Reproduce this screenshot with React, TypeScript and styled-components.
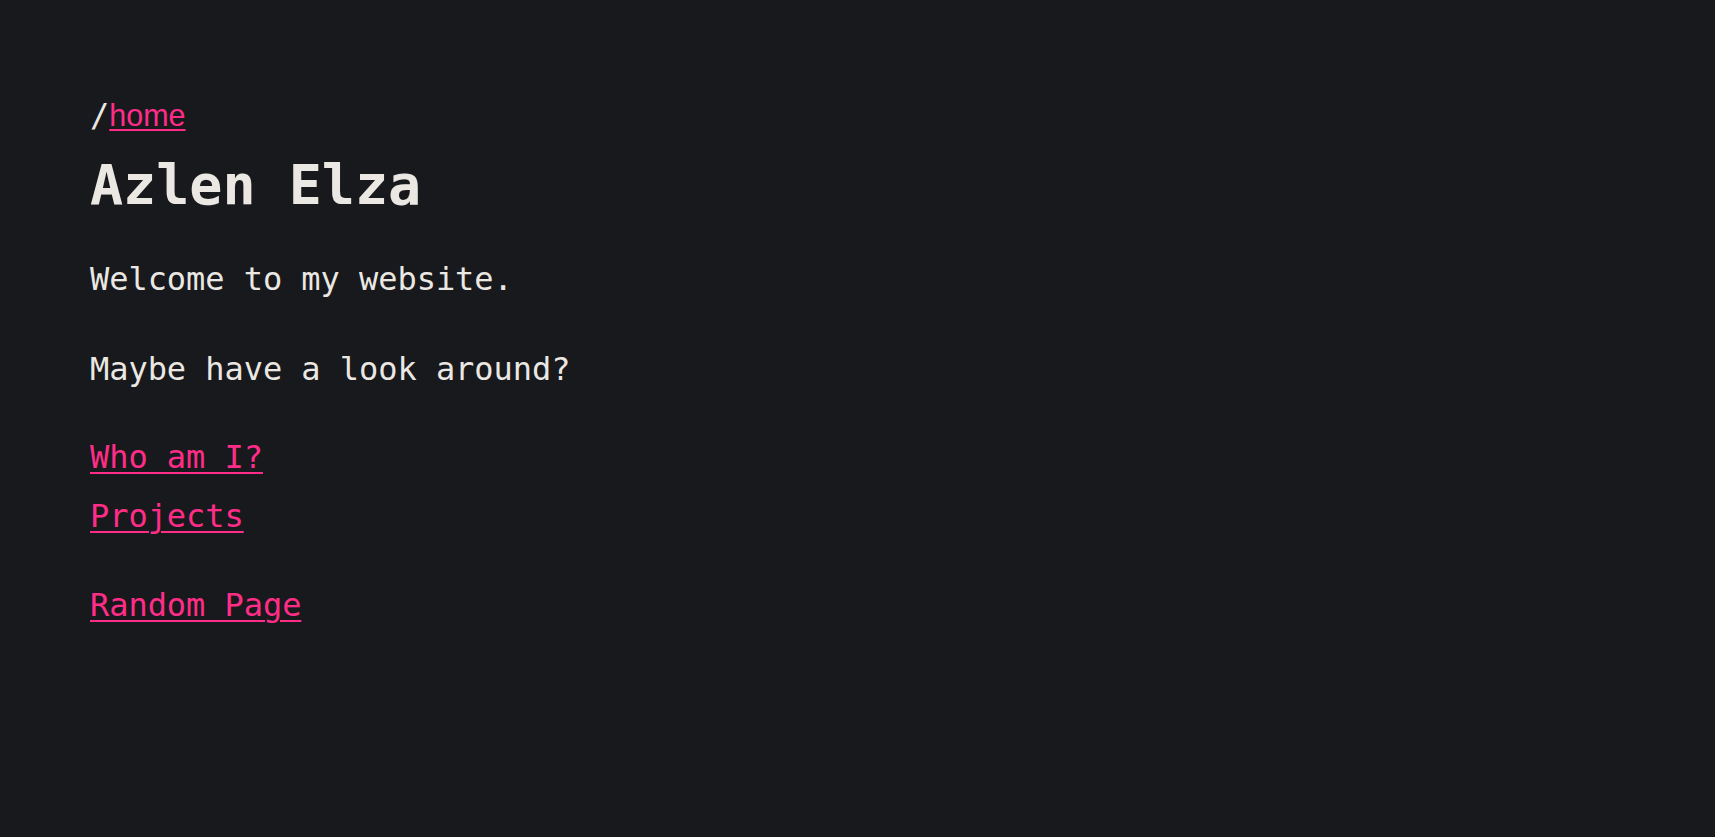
import React from "react";
import styled, { createGlobalStyle } from "styled-components";

const GlobalStyle = createGlobalStyle`
  html, body {
    margin: 0;
    padding: 0;
    background: #18191d;
  }
  body {
    min-height: 100vh;
    font-family: "DejaVu Sans Mono", "Liberation Mono", monospace;
    color: #ebe8e3;
  }
`;

const Page = styled.main`
  display: flex;
  flex-direction: column;
  align-items: flex-start;
  padding: 95px 90px;
  font-size: 32px;
  line-height: 40px;
`;

const Breadcrumb = styled.nav`
  font-size: 32px;
  line-height: 40px;
`;

const Slash = styled.span`
  color: #ebe8e3;
`;

const CrumbLink = styled.a`
  font-family: "Liberation Sans", Arial, sans-serif;
  font-size: 30.5px;
  color: #ff2d87;
  text-decoration: underline;
  text-decoration-thickness: 2px;
  text-underline-offset: 3px;
`;

const Title = styled.h1`
  margin: 18px 0 42px;
  font-size: 55px;
  line-height: 64px;
  font-weight: 700;
  color: #ebe8e3;
`;

const Intro = styled.div`
  display: flex;
  flex-direction: column;
  gap: 50px;
`;

const Paragraph = styled.p`
  margin: 0;
  font-size: 32px;
  line-height: 40px;
  letter-spacing: -0.05px;
`;

const LinkList = styled.div<{ $top: number }>`
  display: flex;
  flex-direction: column;
  align-items: flex-start;
  gap: 19px;
  margin-top: ${(p) => p.$top}px;
`;

const NavLink = styled.a`
  font-size: 32px;
  line-height: 40px;
  letter-spacing: -0.05px;
  color: #ff2d87;
  text-decoration: underline;
  text-decoration-thickness: 2px;
  text-underline-offset: 4px;
`;

export default function App() {
  return (
    <>
      <GlobalStyle />
      <Page>
        <Breadcrumb>
          <Slash>/</Slash>
          <CrumbLink href="#">home</CrumbLink>
        </Breadcrumb>
        <Title>Azlen Elza</Title>
        <Intro>
          <Paragraph>Welcome to my website.</Paragraph>
          <Paragraph>Maybe have a look around?</Paragraph>
        </Intro>
        <LinkList $top={48}>
          <NavLink href="#">Who am I?</NavLink>
          <NavLink href="#">Projects</NavLink>
        </LinkList>
        <LinkList $top={49}>
          <NavLink href="#">Random Page</NavLink>
        </LinkList>
      </Page>
    </>
  );
}
